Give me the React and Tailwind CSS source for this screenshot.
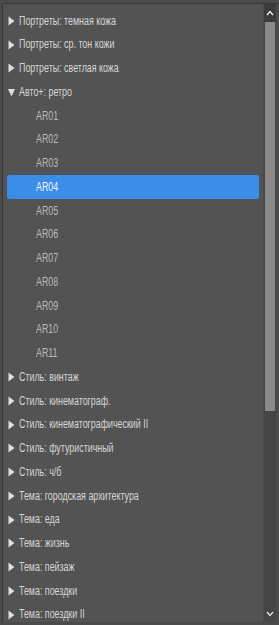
import { useState } from "react";

const groups = [
  { label: "Портреты: темная кожа" },
  { label: "Портреты: ср. тон кожи" },
  { label: "Портреты: светлая кожа" },
  {
    label: "Авто+: ретро",
    open: true,
    items: ["AR01", "AR02", "AR03", "AR04", "AR05", "AR06", "AR07", "AR08", "AR09", "AR10", "AR11"],
  },
  { label: "Стиль: винтаж" },
  { label: "Стиль: кинематограф." },
  { label: "Стиль: кинематографический II" },
  { label: "Стиль: футуристичный" },
  { label: "Стиль: ч/б" },
  { label: "Тема: городская архитектура" },
  { label: "Тема: еда" },
  { label: "Тема: жизнь" },
  { label: "Тема: пейзаж" },
  { label: "Тема: поездки" },
  { label: "Тема: поездки II" },
];

function Caret({ open }) {
  return (
    <svg width="7" height="10" viewBox="0 0 7 10" className="shrink-0">
      {open ? (
        <path d="M0 2 L7 2 L3.5 9.5 Z" fill="#dedede" />
      ) : (
        <path d="M0.5 0.5 L6.5 5 L0.5 9.5 Z" fill="#dedede" />
      )}
    </svg>
  );
}

export default function App() {
  const [selected, setSelected] = useState("AR04");

  return (
    <div
      className="w-[279px] h-[625px] bg-[#4b4b4b] pt-[3px] pl-[2px] flex overflow-hidden"
      style={{ fontFamily: '"Liberation Sans", Arial, sans-serif' }}
    >
      <div className="flex flex-1 h-[619px] border-t border-l border-[#383838] bg-[#535353]">
        {/* tree list */}
        <div className="flex-1 pt-[5px] overflow-hidden">
          {groups.map((g) => (
            <div key={g.label}>
              <div className="h-[23.75px] flex items-center gap-[4px] pl-[5px] text-[12.5px] text-[#d6d6d6]">
                <Caret open={g.open} />
                <span className="leading-none whitespace-nowrap scale-x-[0.71] origin-left">{g.label}</span>
              </div>
              {g.open &&
                g.items.map((it) => (
                  <div
                    key={it}
                    onClick={() => setSelected(it)}
                    className={`h-[23.75px] flex items-center pl-[29px] mx-[4px] rounded-[2px] text-[12.5px] leading-none ${
                      selected === it ? "bg-[#3b8de8] text-[#f2f6fb]" : "text-[#b9b9b9]"
                    }`}
                  >
                    <span className="scale-x-[0.71] origin-left">{it}</span>
                  </div>
                ))}
            </div>
          ))}
        </div>

        {/* scrollbar */}
        <div className="w-[13px] flex flex-col bg-[#444444] border-l border-[#4a4a4a]">
          <div className="h-[18px] flex items-center justify-center bg-[#3c3c3c]">
            <svg width="8" height="6" viewBox="0 0 8 6">
              <path d="M1 5 L4 1.5 L7 5" stroke="#f0f0f0" strokeWidth="1.3" fill="none" />
            </svg>
          </div>
          <div className="h-[389px] mx-[1px] bg-[#8a8a8a]" />
          <div className="flex-1 bg-[#454545]" />
          <div className="h-[16px] flex items-center justify-center bg-[#454545]">
            <svg width="8" height="6" viewBox="0 0 8 6">
              <path d="M1 1 L4 4.5 L7 1" stroke="#e8e8e8" strokeWidth="1.2" fill="none" />
            </svg>
          </div>
        </div>
        <div className="w-[3px] bg-[#4b4b4b]" />
      </div>
    </div>
  );
}
